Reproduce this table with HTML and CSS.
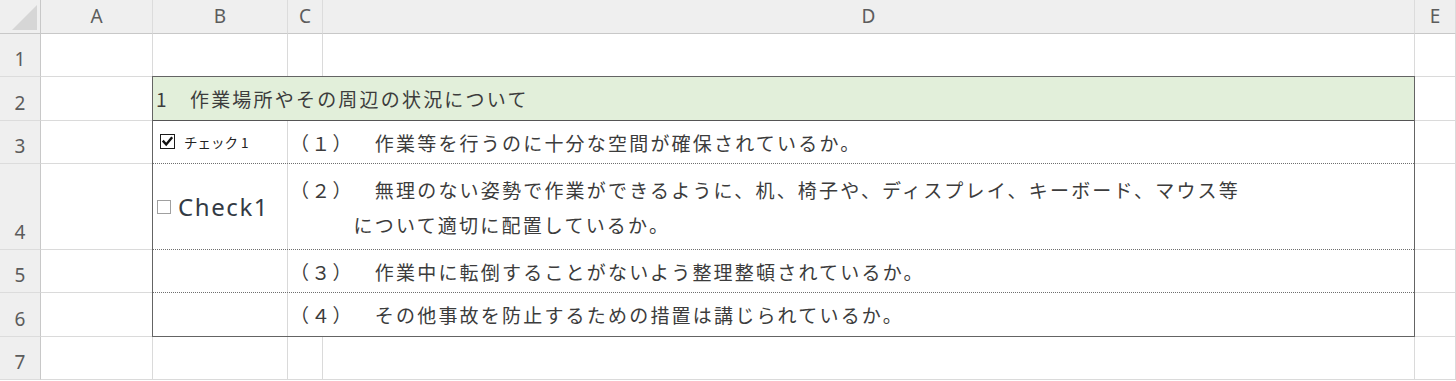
FILE: index.html
```html
<!DOCTYPE html>
<html lang="ja">
<head>
<meta charset="utf-8">
<title>チェックリスト</title>
<link rel="stylesheet" href="styles.css">
</head>
<body>
<div class="sheet">
  <div class="corner">
    <svg viewBox="0 0 26 26" aria-hidden="true"><polygon points="0,26 26,26 26,0" fill="#d6d6d6"/></svg>
  </div>
  <div class="colhead">A</div>
  <div class="colhead">B</div>
  <div class="colhead">C</div>
  <div class="colhead">D</div>
  <div class="colhead">E</div>

  <!-- checklist block covers B2:D6 -->
  <div class="checklist">
    <div class="title">1　作業場所やその周辺の状況について</div>
    <div class="item">
      <div class="mark mark-small">
        <span class="box checked">
          <svg viewBox="0 0 14 14" aria-hidden="true"><path d="M2.8 7 L5.6 10.2 L11.2 3.4" fill="none" stroke="#111" stroke-width="2.6" stroke-linecap="square"/></svg>
        </span>
        <span class="label-small">チェック 1</span>
      </div>
      <div class="text"><p>（１）　作業等を行うのに十分な空間が確保されているか。</p></div>
    </div>
    <div class="item tall">
      <div class="mark mark-large">
        <span class="box"></span>
        <span class="label-large">Check1</span>
      </div>
      <div class="text"><p>（２）　無理のない姿勢で作業ができるように、机、椅子や、ディスプレイ、キーボード、マウス等<br>　　　について適切に配置しているか。</p></div>
    </div>
    <div class="item">
      <div class="mark"></div>
      <div class="text"><p>（３）　作業中に転倒することがないよう整理整頓されているか。</p></div>
    </div>
    <div class="item last">
      <div class="mark"></div>
      <div class="text"><p>（４）　その他事故を防止するための措置は講じられているか。</p></div>
    </div>
  </div>

  <div class="rowhead">1</div>
  <div class="cell"></div><div class="cell"></div><div class="cell"></div><div class="cell"></div><div class="cell"></div>

  <div class="rowhead">2</div>
  <div class="cell"></div><div class="cell"></div>

  <div class="rowhead">3</div>
  <div class="cell"></div><div class="cell"></div>

  <div class="rowhead">4</div>
  <div class="cell"></div><div class="cell"></div>

  <div class="rowhead">5</div>
  <div class="cell"></div><div class="cell"></div>

  <div class="rowhead">6</div>
  <div class="cell"></div><div class="cell"></div>

  <div class="rowhead">7</div>
  <div class="cell"></div><div class="cell"></div><div class="cell"></div><div class="cell"></div><div class="cell"></div>
</div>
</body>
</html>
```
FILE: styles.css
```css
* {
  box-sizing: border-box;
}

body {
  margin: 0;
  background: #ffffff;
  font-family: "Noto Sans", "Noto Sans CJK JP", sans-serif;
}

/* worksheet grid: row header + columns A..E, header row + rows 1..7 */
.sheet {
  display: grid;
  width: 1456px;
  grid-template-columns: 41px 112px 135px 35px 1092px 41px;
  grid-template-rows: 34px 43px 44px 43px 86px 43px 44px 43px;
}

.corner {
  background: #efefef;
  border-right: 1px solid #c8c8c8;
  border-bottom: 1px solid #c8c8c8;
  display: flex;
  align-items: flex-end;
  justify-content: flex-end;
  padding: 0 3px 3px 0;
}

.corner svg {
  display: block;
  width: 25px;
  height: 25px;
}

.colhead {
  background: #efefef;
  border-right: 1px solid #dcdcdc;
  border-bottom: 1px solid #c8c8c8;
  color: #5c5c5c;
  font-size: 19px;
  line-height: 1;
  display: flex;
  align-items: center;
  justify-content: center;
}

.rowhead {
  background: #efefef;
  border-right: 1px solid #c8c8c8;
  border-bottom: 1px solid #dcdcdc;
  color: #5c5c5c;
  font-size: 19px;
  line-height: 19px;
  display: flex;
  align-items: flex-end;
  justify-content: center;
  padding-bottom: 7px;
}

.cell {
  border-right: 1px solid #dadada;
  border-bottom: 1px solid #dadada;
}

/* bordered checklist table */
.checklist {
  grid-column: 3 / 6;
  grid-row: 3 / 8;
  margin: -1px 0 0 -1px;
  border: 1px solid #646464;
  background: #ffffff;
  display: flex;
  flex-direction: column;
  font-family: "Noto Sans CJK JP", sans-serif;
  font-size: 19px;
  letter-spacing: 2.2px;
  text-spacing-trim: space-all;
  color: #3c3c3c;
  position: relative;
  z-index: 1;
}

.title {
  height: 44px;
  flex: none;
  background: #e2efda;
  border-bottom: 1px solid #555555;
  display: flex;
  align-items: center;
  padding-left: 3px;
  white-space: nowrap;
}

.item {
  height: 43px;
  flex: none;
  display: flex;
  border-bottom: 1px dotted #6f6f6f;
}

.item.tall {
  height: 86px;
}

.item.last {
  flex: 1;
  height: auto;
  border-bottom: none;
}

.mark {
  width: 135px;
  flex: none;
  border-right: 1px solid #d9d9d9;
  display: flex;
  align-items: center;
}

.mark-small {
  padding-left: 7px;
}

.mark-large {
  padding-left: 4px;
}

.box {
  width: 14px;
  height: 14px;
  flex: none;
  border: 1px solid #a0a0a0;
  background: #ffffff;
  display: block;
}

.box.checked {
  width: 15px;
  height: 15px;
  border-color: #1a1a1a;
  margin-top: -2px;
}

.box svg {
  display: block;
  width: 13px;
  height: 13px;
}

.label-small {
  margin-left: 9px;
  font-size: 13.5px;
  letter-spacing: 0;
  color: #222222;
}

.label-large {
  margin-left: 7px;
  font-family: "Noto Sans", sans-serif;
  font-size: 24px;
  letter-spacing: 1.6px;
  color: #333a44;
}

.text {
  flex: 1;
  display: flex;
  align-items: center;
  padding-left: 2px;
  white-space: nowrap;
}

.text p {
  margin: 0;
  line-height: 35px;
}
```
